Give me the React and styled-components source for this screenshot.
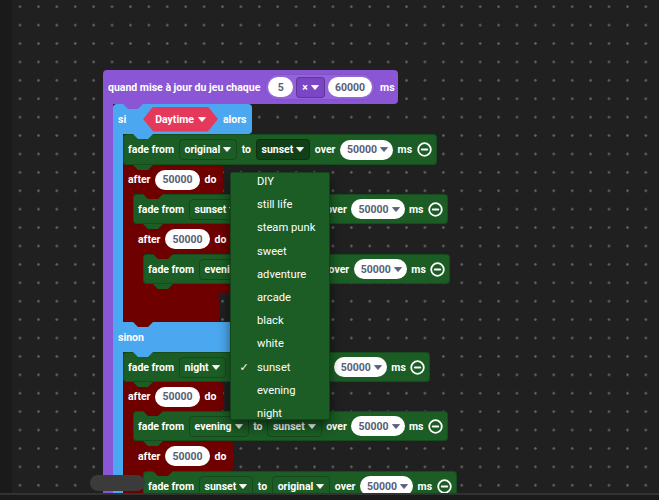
import React from "react";
import styled, { createGlobalStyle, css } from "styled-components";

const PURPLE = "#8a56d6";
const BLUE = "#4ba7ef";
const GREEN = "#1b5d24";
const RED = "#6e0000";
const HEX_RED = "#e5395b";
const INK = "#575e75";

const GlobalStyle = createGlobalStyle`
  html, body {
    margin: 0;
    padding: 0;
    background: #202020;
  }
  body {
    font-family: Roboto, "Liberation Sans", Arial, sans-serif;
  }
`;

// little connector tab hanging under a block
const tab = (left) => css`
  &::after {
    content: "";
    position: absolute;
    left: ${left}px;
    bottom: -5px;
    width: 20px;
    height: 5px;
    background: inherit;
    clip-path: polygon(0 0, 100% 0, 75% 100%, 25% 100%);
    z-index: 1;
  }
`;

const Screen = styled.div`
  position: relative;
  width: 659px;
  height: 500px;
  display: flex;
  flex-direction: column;
  overflow: hidden;
`;

const Main = styled.div`
  flex: 1;
  display: flex;
  min-height: 0;
`;

const Gutter = styled.div`
  width: 12px;
  background: #1a1a1a;
`;

const Workspace = styled.div`
  flex: 1;
  position: relative;
  overflow: hidden;
  box-sizing: border-box;
  padding: 70px 0 0 91px;
  background-color: #202020;
  background-image: radial-gradient(circle, #606060 0 1px, transparent 1.5px);
  background-size: 18.42px 18.42px;
  background-position: -1.2px -2.5px;
  font: 700 10.5px Roboto, "Liberation Sans", Arial, sans-serif;
  color: #fff;
`;

const BottomBar = styled.div`
  height: 5px;
  border-top: 2px solid #323232;
  background: #1a1a1a;
`;

const ScrollThumb = styled.div`
  position: absolute;
  left: 90px;
  top: 475px;
  width: 55px;
  height: 16px;
  border-radius: 8px;
  background: #3b3b3b;
  z-index: 5;
`;

const Stack = styled.div`
  display: flex;
  flex-direction: column;
  align-items: flex-start;
`;

const CBlock = styled.div`
  display: flex;
  flex-direction: column;
  align-items: flex-start;
`;

const Head = styled.div`
  position: relative;
  display: flex;
  align-items: center;
  gap: ${(p) => p.$gap ?? 5}px;
  height: ${(p) => p.$h}px;
  box-sizing: border-box;
  padding: 0 ${(p) => p.$pr ?? 5}px 0 5px;
  background: ${(p) => p.$c};
  border-radius: 4px 4px 4px 0;
  white-space: nowrap;
  ${tab(20)}
`;

const Mid = styled.div`
  position: relative;
  display: flex;
  align-items: center;
  width: ${(p) => p.$w}px;
  height: 30px;
  box-sizing: border-box;
  padding-left: 5px;
  background: ${(p) => p.$c};
  border-radius: 0 4px 4px 0;
  ${tab(20)}
`;

const Body = styled.div`
  display: flex;
`;

const Arm = styled.div`
  width: 10px;
  background: ${(p) => p.$c};
`;

const Foot = styled.div`
  position: relative;
  width: ${(p) => p.$w}px;
  height: ${(p) => p.$h}px;
  background: ${(p) => p.$c};
  border-radius: 0 4px 4px 4px;
  ${tab(10)}
`;

const Row = styled.div`
  position: relative;
  display: flex;
  align-items: center;
  gap: 4.5px;
  height: ${(p) => p.$h || 30}px;
  box-sizing: border-box;
  padding: 0 5px;
  background: ${GREEN};
  border-radius: 4px;
  box-shadow: inset 0 0 0 1px rgba(0, 0, 0, 0.18);
  white-space: nowrap;
  ${tab(10)}
`;

const Label = styled.span`
  white-space: nowrap;
`;

const Field = styled.span`
  display: inline-flex;
  align-items: center;
  gap: 3px;
  height: 21px;
  box-sizing: border-box;
  padding: 0 5px;
  border-radius: 4px;
  border: 1px solid rgba(0, 0, 0, 0.22);
  background: ${(p) => (p.$active ? "#113f17" : p.$bg || "transparent")};
`;

const Oval = styled.span`
  display: inline-flex;
  align-items: center;
  justify-content: center;
  gap: 3px;
  height: 20px;
  min-width: ${(p) => p.$min || 0}px;
  box-sizing: border-box;
  padding: 0 ${(p) => (p.$arrow ? 5 : 7)}px 0 7px;
  border-radius: 10px;
  background: #fff;
  color: ${INK};
`;

const MathSlot = styled.span`
  display: inline-flex;
  align-items: center;
  gap: 3px;
  height: 26px;
  box-sizing: border-box;
  padding: 0 2px;
  border-radius: 13px;
  background: #9462db;
  border: 1px solid rgba(0, 0, 0, 0.12);
`;

const Hex = styled.span`
  display: inline-flex;
  align-items: center;
  gap: 4px;
  height: 25px;
  margin: 0 0 0 12px;
  padding: 0 12px;
  background: ${HEX_RED};
  clip-path: polygon(10px 0, calc(100% - 10px) 0, 100% 50%, calc(100% - 10px) 100%, 10px 100%, 0 50%);
`;

const Menu = styled.div`
  position: absolute;
  left: 230px;
  top: 172px;
  width: 100px;
  height: 248px;
  box-sizing: border-box;
  overflow: hidden;
  background: ${GREEN};
  border: 1px solid #12451a;
  border-radius: 2px;
  box-shadow: 0 6px 12px rgba(0, 0, 0, 0.5);
  z-index: 10;
`;

const MenuList = styled.div`
  display: flex;
  flex-direction: column;
  margin-top: -3px;
`;

const MenuItem = styled.div`
  display: flex;
  align-items: center;
  height: 23.2px;
  flex: none;
  font: 400 11.2px Roboto, "Liberation Sans", Arial, sans-serif;
  color: #fff;
  white-space: nowrap;
`;

const CheckCol = styled.span`
  width: 26px;
  text-align: center;
  font-family: "DejaVu Sans", sans-serif;
  font-size: 11px;
`;

const Arrow = ({ color = "#fff" }) => (
  <svg width="8" height="5" viewBox="0 0 8 5">
    <polygon points="0.5,0.5 7.5,0.5 4,4.6" fill={color} strokeLinejoin="round" stroke={color} strokeWidth="0.8" />
  </svg>
);

const MinusIcon = () => (
  <svg width="15" height="15" viewBox="0 0 15 15">
    <circle cx="7.5" cy="7.5" r="6.3" fill="none" stroke="#fff" strokeWidth="1.8" />
    <rect x="3.8" y="6.5" width="7.4" height="2" rx="1" fill="#fff" />
  </svg>
);

const Fade = ({ from, to, h, active }) => (
  <Row $h={h}>
    <Label>fade from</Label>
    <Field>
      {from}
      <Arrow />
    </Field>
    <Label>to</Label>
    <Field $active={active}>
      {to}
      <Arrow />
    </Field>
    <Label>over</Label>
    <Oval $arrow>
      50000
      <Arrow color={INK} />
    </Oval>
    <Label>ms</Label>
    <MinusIcon />
  </Row>
);

const After = ({ h = 30, footH = 24, children }) => (
  <CBlock>
    <Head $c={RED} $h={h} $gap={5} $pr={7}>
      <Label>after</Label>
      <Oval>50000</Oval>
      <Label>do</Label>
    </Head>
    <Body>
      <Arm $c={RED} />
      <Stack>{children}</Stack>
    </Body>
    <Foot $c={RED} $w={97} $h={footH} />
  </CBlock>
);

const themes = [
  "DIY",
  "still life",
  "steam punk",
  "sweet",
  "adventure",
  "arcade",
  "black",
  "white",
  "sunset",
  "evening",
  "night",
];

export default function App() {
  return (
    <Screen>
      <GlobalStyle />
      <Main>
        <Gutter />
        <Workspace>
          <CBlock>
            <Head $c={PURPLE} $h={34} $gap={5} $pr={3}>
              <Label>quand mise à jour du jeu chaque</Label>
              <MathSlot>
                <Oval $min={25}>5</Oval>
                <Field $bg="#7b46c6">
                  ×
                  <Arrow />
                </Field>
                <Oval>60000</Oval>
              </MathSlot>
              <Label>ms</Label>
            </Head>
            <Body>
              <Arm $c={PURPLE} />
              <Stack>
                <CBlock>
                  <Head $c={BLUE} $h={30} $gap={5} $pr={5}>
                    <Label>si</Label>
                    <Hex>
                      Daytime
                      <Arrow />
                    </Hex>
                    <Label>alors</Label>
                  </Head>
                  <Body>
                    <Arm $c={BLUE} />
                    <Stack>
                      <Fade from="original" to="sunset" h={31} active />
                      <After h={29} footH={28}>
                        <Fade from="sunset" to="evening" />
                        <After h={30} footH={10}>
                          <Fade from="evening" to="night" />
                        </After>
                      </After>
                    </Stack>
                  </Body>
                  <Mid $c={BLUE} $w={138}>
                    <Label>sinon</Label>
                  </Mid>
                  <Body>
                    <Arm $c={BLUE} />
                    <Stack>
                      <Fade from="night" to="evening" />
                      <After h={29} footH={24}>
                        <Fade from="evening" to="sunset" />
                        <After h={30} footH={24}>
                          <Fade from="sunset" to="original" />
                        </After>
                      </After>
                    </Stack>
                  </Body>
                  <Foot $c={BLUE} $w={138} $h={24} />
                </CBlock>
              </Stack>
            </Body>
            <Foot $c={PURPLE} $w={200} $h={24} />
          </CBlock>
        </Workspace>
      </Main>
      <BottomBar />
      <ScrollThumb />
      <Menu>
        <MenuList>
          {themes.map((t) => (
            <MenuItem key={t}>
              <CheckCol>{t === "sunset" ? "✓" : ""}</CheckCol>
              {t}
            </MenuItem>
          ))}
        </MenuList>
      </Menu>
    </Screen>
  );
}
